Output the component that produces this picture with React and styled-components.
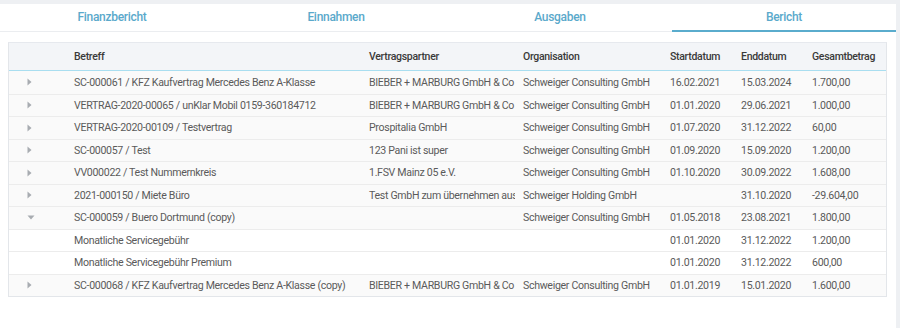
import React from "react";
import styled, { createGlobalStyle } from "styled-components";

const GlobalStyle = createGlobalStyle`
  html, body {
    margin: 0;
    padding: 0;
    background: #eef0f3;
    font-family: Roboto, "Liberation Sans", Arial, sans-serif;
  }
`;

const Page = styled.div`
  padding-top: 4px;
  width: 896px;
  height: 324px;
`;

const Panel = styled.div`
  background: #fff;
  height: 100%;
`;

const Tabs = styled.div`
  display: grid;
  grid-template-columns: repeat(4, 1fr);
  border-bottom: 1px solid #ebedf0;
`;

const Tab = styled.div`
  height: 26px;
  display: flex;
  align-items: center;
  justify-content: center;
  font-size: 12px;
  letter-spacing: -0.3px;
  font-weight: 500;
  color: #5aa9cb;
  border-bottom: 2px solid ${(p) => (p.active ? "#5aaccd" : "transparent")};
  margin-bottom: -1px;
`;

const Body = styled.div`
  padding: 10px 9px 0 8px;
`;

const Table = styled.div`
  border: 1px solid #e3e6ea;
  border-top-color: #e6e9ee;
`;

const cols = "55px 295px 156px 145px 71px 71px 1fr";

const HeadRow = styled.div`
  display: grid;
  grid-template-columns: ${cols};
  height: 27px;
  background: #f3f5f8;
  border-bottom: 1px solid #a9def0;
`;

const HeadCell = styled.div`
  display: flex;
  align-items: center;
  padding-left: ${(p) => p.pad || 10}px;
  font-size: 10.5px;
  letter-spacing: -0.3px;
  font-weight: 500;
  color: #3a3a3a;
  white-space: nowrap;
`;

const Row = styled.div`
  display: grid;
  grid-template-columns: ${cols};
  height: 22.5px;
  box-sizing: border-box;
  background: ${(p) => (p.child ? "#fff" : "#fafafa")};
  border-top: ${(p) => (p.first ? "none" : "1px solid #ececec")};
`;

const Cell = styled.div`
  display: flex;
  align-items: center;
  padding-left: ${(p) => p.pad || 10}px;
  font-size: 10.6px;
  letter-spacing: -0.32px;
  color: #5a5a5a;
  white-space: nowrap;
  overflow: hidden;
`;

const ToggleCell = styled.div`
  display: flex;
  align-items: center;
  padding-left: 18px;
`;

const Arrow = ({ open }) =>
  open ? (
    <svg width="8" height="5" viewBox="0 0 8 5">
      <path d="M0.5 0.5 L7.5 0.5 L4 4.5 Z" fill="#a8acb1" />
    </svg>
  ) : (
    <svg width="5" height="8" viewBox="0 0 5 8">
      <path d="M0.5 0.5 L4.5 4 L0.5 7.5 Z" fill="#a8acb1" />
    </svg>
  );

const rows = [
  { t: "SC-000061 / KFZ Kaufvertrag Mercedes Benz A-Klasse", p: "BIEBER + MARBURG GmbH & Co", o: "Schweiger Consulting GmbH", s: "16.02.2021", e: "15.03.2024", g: "1.700,00" },
  { t: "VERTRAG-2020-00065 / unKlar Mobil 0159-360184712", p: "BIEBER + MARBURG GmbH & Co", o: "Schweiger Consulting GmbH", s: "01.01.2020", e: "29.06.2021", g: "1.000,00" },
  { t: "VERTRAG-2020-00109 / Testvertrag", p: "Prospitalia GmbH", o: "Schweiger Consulting GmbH", s: "01.07.2020", e: "31.12.2022", g: "60,00" },
  { t: "SC-000057 / Test", p: "123 Pani ist super", o: "Schweiger Consulting GmbH", s: "01.09.2020", e: "15.09.2020", g: "1.200,00" },
  { t: "VV000022 / Test Nummernkreis", p: "1.FSV Mainz 05 e.V.", o: "Schweiger Consulting GmbH", s: "01.10.2020", e: "30.09.2022", g: "1.608,00" },
  { t: "2021-000150 / Miete Büro", p: "Test GmbH zum übernehmen aus", o: "Schweiger Holding GmbH", s: "", e: "31.10.2020", g: "-29.604,00" },
  { t: "SC-000059 / Buero Dortmund (copy)", p: "", o: "Schweiger Consulting GmbH", s: "01.05.2018", e: "23.08.2021", g: "1.800,00", open: true },
  { t: "Monatliche Servicegebühr", p: "", o: "", s: "01.01.2020", e: "31.12.2022", g: "1.200,00", child: true },
  { t: "Monatliche Servicegebühr Premium", p: "", o: "", s: "01.01.2020", e: "31.12.2022", g: "600,00", child: true },
  { t: "SC-000068 / KFZ Kaufvertrag Mercedes Benz A-Klasse (copy)", p: "BIEBER + MARBURG GmbH & Co", o: "Schweiger Consulting GmbH", s: "01.01.2019", e: "15.01.2020", g: "1.600,00" },
];

export default function App() {
  return (
    <>
      <GlobalStyle />
      <Page>
        <Panel>
          <Tabs>
            <Tab>Finanzbericht</Tab>
            <Tab>Einnahmen</Tab>
            <Tab>Ausgaben</Tab>
            <Tab active>Bericht</Tab>
          </Tabs>
          <Body>
            <Table>
              <HeadRow>
                <HeadCell />
                <HeadCell>Betreff</HeadCell>
                <HeadCell>Vertragspartner</HeadCell>
                <HeadCell pad={8}>Organisation</HeadCell>
                <HeadCell>Startdatum</HeadCell>
                <HeadCell>Enddatum</HeadCell>
                <HeadCell>Gesamtbetrag</HeadCell>
              </HeadRow>
              {rows.map((r, i) => (
                <Row key={i} first={i === 0} child={r.child}>
                  <ToggleCell>{!r.child && <Arrow open={r.open} />}</ToggleCell>
                  <Cell>{r.t}</Cell>
                  <Cell>{r.p}</Cell>
                  <Cell pad={8}>{r.o}</Cell>
                  <Cell>{r.s}</Cell>
                  <Cell>{r.e}</Cell>
                  <Cell>{r.g}</Cell>
                </Row>
              ))}
            </Table>
          </Body>
        </Panel>
      </Page>
    </>
  );
}
